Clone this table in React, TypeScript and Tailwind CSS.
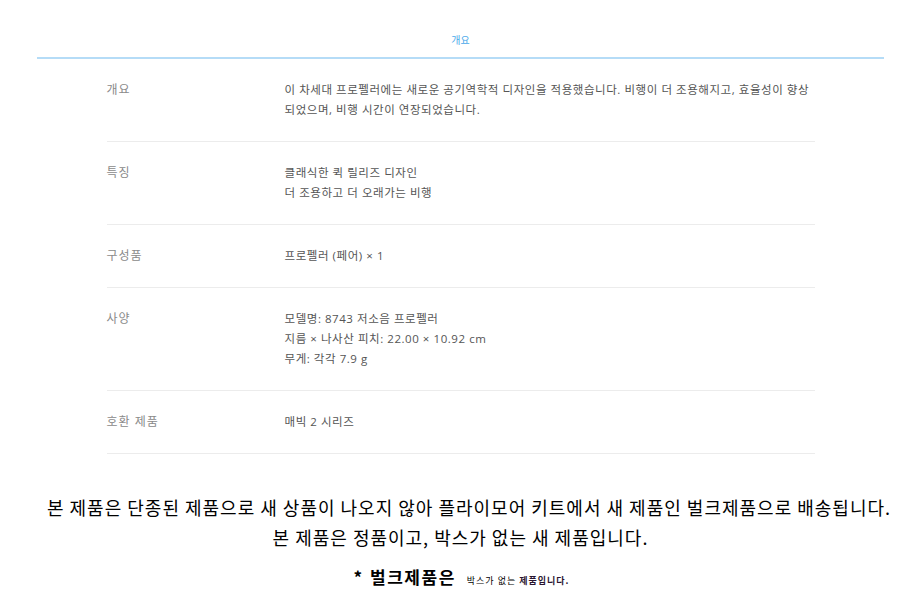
import React from 'react'

const rows: { label: string; lines: string[] }[] = [
  {
    label: '개요',
    lines: [
      '이 차세대 프로펠러에는 새로운 공기역학적 디자인을 적용했습니다. 비행이 더 조용해지고, 효율성이 향상',
      '되었으며, 비행 시간이 연장되었습니다.',
    ],
  },
  { label: '특징', lines: ['클래식한 퀵 릴리즈 디자인', '더 조용하고 더 오래가는 비행'] },
  { label: '구성품', lines: ['프로펠러 (페어) × 1'] },
  {
    label: '사양',
    lines: ['모델명: 8743 저소음 프로펠러', '지름 × 나사산 피치: 22.00 × 10.92 cm', '무게: 각각 7.9 g'],
  },
  { label: '호환 제품', lines: ['매빅 2 시리즈'] },
]

export default function App() {
  return (
    <div className="w-[921px] h-[604px] bg-white overflow-hidden font-['Open_Sans','Noto_Sans_CJK_KR',sans-serif]">
      {/* tab header */}
      <div className="mx-[37px] pt-[32px] border-b-[2px] border-[#b5dcf7]">
        <p className="text-center text-[10px] leading-[16px] pb-[9px] text-[#4aa9ea]">개요</p>
      </div>

      {/* spec table */}
      <div className="w-[708px] mx-auto">
        {rows.map((r, i) => (
          <div key={i} className="flex py-[21px] border-b border-[#ececec]">
            <div className="w-[178px] shrink-0 text-[12px] leading-[20px] text-[#8a8a8a] tracking-[1px]">{r.label}</div>
            <div className="flex-1 text-[11.5px] leading-[20px] text-[#555] tracking-[0.55px]">
              {r.lines.map((l, j) => (
                <div key={j} className="whitespace-nowrap">{l}</div>
              ))}
            </div>
          </div>
        ))}
      </div>

      {/* notice */}
      <div className="mt-[38px] text-center text-black font-['Noto_Sans_CJK_KR',sans-serif]">
        <p className="pl-[17px] text-[18px] leading-[30px] tracking-[1px] whitespace-nowrap">
          본 제품은 단종된 제품으로 새 상품이 나오지 않아 플라이모어 키트에서 새 제품인 벌크제품으로 배송됩니다.
        </p>
        <p className="text-[18px] leading-[30px] tracking-[1px]">본 제품은 정품이고, 박스가 없는 새 제품입니다.</p>
        <p className="mt-[10px] leading-[30px] pl-[2px]">
          <span className="text-[17px] font-bold mr-[8px]">*</span>
          <span className="text-[17px] font-bold tracking-[1.5px]">벌크제품은</span>
          <span className="text-[9px] ml-[11px] tracking-[1px]">박스가 없는 </span>
          <span className="text-[9px] font-bold tracking-[1px] text-[#2a1530]">제품입니다.</span>
        </p>
      </div>
    </div>
  )
}
